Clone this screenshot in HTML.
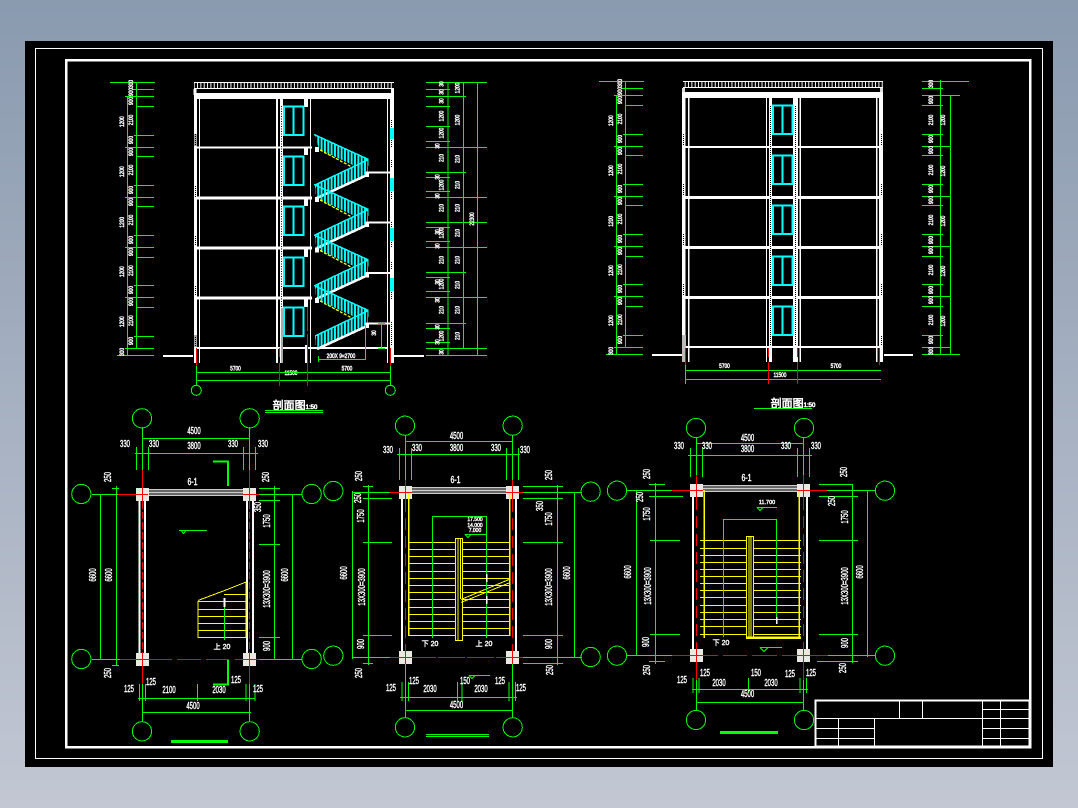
<!DOCTYPE html>
<html><head><meta charset="utf-8"><style>
html,body{margin:0;padding:0;background:#a6afc0}
svg{display:block}
text{font-family:"Liberation Sans","Noto Sans CJK SC",sans-serif;fill:#fff;text-anchor:middle;stroke:#fff;stroke-width:.25}
.p text{font-size:10px;stroke-width:.4}
.e text{font-size:6px;stroke-width:.45}
</style></head><body>
<svg width="1078" height="808" viewBox="0 0 1078 808" xmlns="http://www.w3.org/2000/svg" shape-rendering="crispEdges">
<defs>
<linearGradient id="bg" x1="0" y1="0" x2="0" y2="1"><stop offset="0" stop-color="#8a9aaf"/><stop offset="1" stop-color="#c2c7d3"/></linearGradient>
<pattern id="bal" width="3.34" height="10" patternUnits="userSpaceOnUse"><rect width="2" height="10" fill="#0ff"/></pattern>
<pattern id="par" width="3.34" height="10" patternUnits="userSpaceOnUse"><rect width="1" height="10" fill="#fff"/></pattern>
<g id="win"><path d="M0 .5H21.5M0 29H21.5M1 0V29.5M20.5 0V29.5M10.7 0V29.5" stroke="#0ff" stroke-width="2" fill="none"/></g>
<g id="flight">
<polygon points="315,134.5 368.5,159.5 368,172 319,149.5" fill="url(#bal)"/>
<path d="M314 134.5L368.5 159.5" stroke="#0ff" stroke-width="1.5" fill="none"/>
<path d="M320 150L352 167" stroke="#ff0" stroke-width="1.3" stroke-dasharray="3 1.5" fill="none"/>
<polygon points="315,185 368.5,159.5 368,173 316,197" fill="url(#bal)"/>
<path d="M315 185L368.5 159.5" stroke="#0ff" stroke-width="1.5" fill="none"/>
<path d="M317 198L367 175" stroke="#fff" stroke-width="2.6" fill="none"/>
<path d="M366 172.7H390" stroke="#fff" stroke-width="2" fill="none"/>
<rect x="315" y="147" width="4" height="5" fill="#fff"/><rect x="365" y="172" width="4" height="5" fill="#fff"/>
<rect x="304" y="147" width="4" height="8" fill="#fff"/>
</g>
<g id="colm"><rect width="13" height="13" fill="#e9e9e1"/></g>
</defs>
<rect width="1078" height="808" fill="url(#bg)"/>
<rect x="25" y="41" width="1028" height="726" fill="#000"/>
<rect x="35.5" y="48.5" width="1007" height="710" fill="none" stroke="#fff"/>
<rect x="66" y="60" width="964" height="687" fill="none" stroke="#fff" stroke-width="2.5"/>

<!-- title block -->
<g stroke="#fff" fill="none">
<rect x="815.5" y="700.5" width="214" height="46" stroke-width="2"/>
<path d="M815 718.5H1030M815 728.5H874M815 738.5H874M982 709.5H1030M982 728.5H1030M982 738.5H1030M899.5 700V718M922.5 700V718M982.5 700V747M1000.5 700V747M838.5 718V747M874.5 718V747"/>
</g>

<!-- SECTION 1 -->
<g>
<rect x="194" y="82" width="200" height="7" fill="url(#par)"/>
<path d="M194 82.5H394M194 88.5H394" stroke="#fff"/>
<rect x="193.5" y="89" width="3" height="6" fill="#fff"/><rect x="391" y="89" width="3" height="6" fill="#fff"/>
<rect x="194" y="93" width="200" height="6" fill="#fff"/>
<g fill="#fff">
<rect x="194" y="99" width="3" height="264"/><rect x="199" y="99" width="1" height="264"/>
<rect x="276" y="99" width="2" height="264"/><rect x="280" y="99" width="3" height="264"/>
<rect x="305" y="345" width="2" height="18"/><rect x="310" y="99" width="1" height="264"/>
<rect x="387" y="99" width="1" height="264"/><rect x="390" y="99" width="4" height="264"/>
<rect x="304" y="99" width="4" height="8"/><rect x="304" y="197" width="4" height="9"/><rect x="304" y="248" width="4" height="9"/><rect x="304" y="298" width="4" height="9"/>
<rect x="194" y="146.5" width="118" height="2"/><rect x="194" y="196.5" width="118" height="3"/><rect x="194" y="246.5" width="118" height="3"/><rect x="194" y="296.5" width="118" height="3"/><rect x="194" y="347" width="194" height="2"/>
<rect x="163" y="355" width="30" height="2"/><rect x="394" y="355" width="30" height="2"/>
</g>
<rect x="194" y="134" width="3" height="12" fill="#aaa"/><rect x="194" y="335" width="3" height="12" fill="#aaa"/><rect x="281" y="308" width="2" height="55" fill="#aaa"/>
<path d="M281.5 106V308" stroke="#000" stroke-dasharray="1 1.5"/>
<path d="M195.5 134V146M195.5 186V197M195.5 236V246M195.5 286V296M195.5 337V347M391.5 120V128M391.5 140V148M391.5 160V168M391.5 192V200M391.5 222V228M391.5 242V248M391.5 262V270M391.5 292V300M391.5 322V345" stroke="#000" stroke-dasharray="1 1"/>
<g fill="#0ff"><rect x="390" y="128" width="4" height="11"/><rect x="390" y="178" width="4" height="13"/><rect x="390" y="228" width="4" height="13"/><rect x="390" y="278" width="4" height="13"/></g>
<use href="#win" x="283" y="106"/><use href="#win" x="283" y="156"/><use href="#win" x="283" y="206"/><use href="#win" x="283" y="257"/><use href="#win" x="283" y="307"/>
<use href="#flight"/><use href="#flight" y="50"/><use href="#flight" y="100.5"/><use href="#flight" y="151"/>
<g id="s1l">
<path d="M136.5 82V348M127.5 96V355M110 82.5H155M133 89.5H154M125 96.5H154M136 106.5H154M134 135.5H154M125 147.5H154M136 156.5H154M134 185.5H154M125 197.5H154M136 206.5H154M134 235.5H154M125 247.5H154M136 257.5H154M134 285.5H154M125 297.5H154M136 307.5H154M134 336.5H154M125 348.5H154M117 355.5H154" stroke="#0f0" fill="none"/>
<g class="e">
<text transform="translate(124 121.7) rotate(-90) scale(.8 1)">1200</text><text transform="translate(124 171.7) rotate(-90) scale(.8 1)">1200</text><text transform="translate(124 222.3) rotate(-90) scale(.8 1)">1200</text><text transform="translate(124 271.7) rotate(-90) scale(.8 1)">1200</text><text transform="translate(124 321.7) rotate(-90) scale(.8 1)">1200</text>
<text transform="translate(124 352) rotate(-90) scale(.8 1)">300</text>
<text transform="translate(133 84) rotate(-90) scale(.8 1)">300</text><text transform="translate(133 92) rotate(-90) scale(.8 1)">900</text><text transform="translate(133 101) rotate(-90) scale(.8 1)">900</text>
<text transform="translate(133 120) rotate(-90) scale(.8 1)">2100</text><text transform="translate(133 170) rotate(-90) scale(.8 1)">2100</text><text transform="translate(133 220) rotate(-90) scale(.8 1)">2100</text><text transform="translate(133 270.7) rotate(-90) scale(.8 1)">2100</text><text transform="translate(133 320.7) rotate(-90) scale(.8 1)">2100</text>
<text transform="translate(133 140) rotate(-90) scale(.8 1)">900</text><text transform="translate(133 152) rotate(-90) scale(.8 1)">900</text><text transform="translate(133 190) rotate(-90) scale(.8 1)">900</text><text transform="translate(133 202) rotate(-90) scale(.8 1)">900</text><text transform="translate(133 240) rotate(-90) scale(.8 1)">900</text><text transform="translate(133 252) rotate(-90) scale(.8 1)">900</text><text transform="translate(133 290) rotate(-90) scale(.8 1)">900</text><text transform="translate(133 302) rotate(-90) scale(.8 1)">900</text><text transform="translate(133 341) rotate(-90) scale(.8 1)">900</text>
</g>
</g>
<path d="M426 82.5H487M426 89.5H450M426 96.5H466M426 106.5H450M426 126.5H450M426 141.5H450M426 147.5H487M426 172.5H466M426 177.5H450M426 191.5H450M426 197.5H487M426 222.5H487M426 227.5H450M426 241.5H450M426 247.5H487M426 272.5H466M426 277.5H450M426 291.5H450M426 297.5H487M426 323.5H466M426 328.5H450M426 342.5H450M426 348.5H487M426 355.5H487M448 82V356M463.5 82V348M477.5 82V355" stroke="#0f0" fill="none"/>
<g class="e">
<text transform="translate(443.7 84) rotate(-90) scale(.8 1)">30</text><text transform="translate(443.7 92) rotate(-90) scale(.8 1)">30</text><text transform="translate(443.7 101) rotate(-90) scale(.8 1)">30</text><text transform="translate(443.7 116) rotate(-90) scale(.8 1)">1200</text><text transform="translate(443.7 133) rotate(-90) scale(.8 1)">1200</text><text transform="translate(443.7 158) rotate(-90) scale(.8 1)">210</text><text transform="translate(443.7 185) rotate(-90) scale(.8 1)">1200</text><text transform="translate(443.7 208) rotate(-90) scale(.8 1)">210</text><text transform="translate(443.7 233) rotate(-90) scale(.8 1)">1200</text><text transform="translate(443.7 260) rotate(-90) scale(.8 1)">210</text><text transform="translate(443.7 284) rotate(-90) scale(.8 1)">1200</text><text transform="translate(443.7 310) rotate(-90) scale(.8 1)">210</text><text transform="translate(443.7 336) rotate(-90) scale(.8 1)">1200</text><text transform="translate(443.7 352) rotate(-90) scale(.8 1)">30</text>
<text transform="translate(439.7 146) rotate(-90) scale(.8 1)">30</text><text transform="translate(439.7 177) rotate(-90) scale(.8 1)">30</text><text transform="translate(439.7 196) rotate(-90) scale(.8 1)">30</text><text transform="translate(439.7 232) rotate(-90) scale(.8 1)">30</text><text transform="translate(439.7 246) rotate(-90) scale(.8 1)">30</text><text transform="translate(439.7 282) rotate(-90) scale(.8 1)">30</text><text transform="translate(439.7 300) rotate(-90) scale(.8 1)">30</text><text transform="translate(439.7 327) rotate(-90) scale(.8 1)">30</text><text transform="translate(439.7 342) rotate(-90) scale(.8 1)">30</text>
<text transform="translate(459.7 88) rotate(-90) scale(.8 1)">1200</text><text transform="translate(459.7 120) rotate(-90) scale(.8 1)">1200</text><text transform="translate(459.7 159) rotate(-90) scale(.8 1)">210</text><text transform="translate(459.7 185) rotate(-90) scale(.8 1)">210</text><text transform="translate(459.7 208) rotate(-90) scale(.8 1)">210</text><text transform="translate(459.7 233) rotate(-90) scale(.8 1)">210</text><text transform="translate(459.7 260) rotate(-90) scale(.8 1)">210</text><text transform="translate(459.7 285) rotate(-90) scale(.8 1)">210</text><text transform="translate(459.7 310) rotate(-90) scale(.8 1)">210</text><text transform="translate(459.7 336) rotate(-90) scale(.8 1)">210</text>
<text transform="translate(474 219) rotate(-90) scale(.8 1)">22300</text>
<text transform="translate(235.5 370.5) scale(.8 1)">5700</text><text transform="translate(291 375) scale(.8 1)">11500</text><text transform="translate(347 370.5) scale(.8 1)">5700</text>
<text transform="translate(341 358) scale(.8 1)">200X 9=2700</text>
<text transform="translate(376 333) rotate(-90) scale(.8 1)">30</text>
</g>
<path d="M196 372.5H391M196 380.5H391M196.5 366V385M390.5 366V385M318 359.5H366M318.5 356V362M365.5 325V360M381.5 323V348M378 348.5H385M378 323.5H385" stroke="#0f0" fill="none"/>
<path d="M196.5 348V366M279.5 348V357M279.5 363V386M307.5 307V331M307.5 334V386M390.5 348V366" stroke="#f00" fill="none"/>
<circle cx="196.3" cy="390.3" r="5" stroke="#0f0" fill="none"/><circle cx="390.3" cy="390.3" r="5" stroke="#0f0" fill="none"/>
</g>
<text x="295" y="409" style="font-size:11px;stroke-width:.6">剖面图<tspan style="font-size:6px">1:50</tspan></text>
<path d="M265 410.5H323M265 412.5H323" stroke="#0f0"/>

<!-- SECTION 2 -->
<g>
<rect x="683" y="81" width="200" height="7" fill="url(#par)"/>
<path d="M683 81.5H883M683 87.5H883" stroke="#fff"/>
<rect x="682" y="88" width="3" height="6" fill="#ddd"/><rect x="880" y="88" width="3" height="6" fill="#ddd"/>
<g fill="#fff">
<rect x="682" y="92" width="201" height="6"/>
<rect x="682" y="98" width="3.5" height="264"/><rect x="688" y="98" width="1.4" height="264"/>
<rect x="766" y="98" width="1" height="264"/><rect x="769" y="98" width="3" height="264"/>
<rect x="793" y="98" width="5" height="264"/><rect x="799.5" y="98" width="1.4" height="264"/>
<rect x="876" y="98" width="1.4" height="264"/><rect x="879" y="98" width="4" height="264"/>
<rect x="682" y="146" width="201" height="2"/><rect x="682" y="196" width="201" height="3"/><rect x="682" y="246" width="201" height="3"/><rect x="682" y="296" width="201" height="3"/><rect x="682" y="346" width="201" height="2"/>
<rect x="652" y="354" width="30" height="2"/><rect x="884" y="354" width="29" height="2"/>
</g>
<path d="M770.5 106V345M795.5 106V345M683.5 134V146M683.5 184V196M683.5 234V246M683.5 284V296M881.5 134V146M881.5 184V196M881.5 234V246M881.5 284V296M881.5 336V346" stroke="#000" stroke-dasharray="1 1"/>
<rect x="682" y="335" width="4" height="27" fill="#bbb"/>
<use href="#win" x="772" y="105"/><use href="#win" x="772" y="155"/><use href="#win" x="772" y="205"/><use href="#win" x="772" y="256"/><use href="#win" x="772" y="306"/>
<use href="#s1l" x="489" y="-1"/>
<path d="M922 81.5H969M922 88.5H943M922 95.5H960M922 105.5H943M922 134.5H943M922 146.5H951M922 155.5H943M922 184.5H943M922 196.5H951M922 205.5H943M922 234.5H943M922 246.5H951M922 256.5H943M922 284.5H943M922 296.5H951M922 306.5H943M922 335.5H943M922 347.5H951M922 354.5H960M940.5 80V354M950.5 95V354" stroke="#0f0" fill="none"/>
<g class="e">
<text transform="translate(933 84) rotate(-90) scale(.8 1)">300</text><text transform="translate(933 100) rotate(-90) scale(.8 1)">900</text><text transform="translate(933 120) rotate(-90) scale(.8 1)">2100</text><text transform="translate(933 139) rotate(-90) scale(.8 1)">900</text><text transform="translate(933 150) rotate(-90) scale(.8 1)">900</text><text transform="translate(933 170) rotate(-90) scale(.8 1)">2100</text><text transform="translate(933 189) rotate(-90) scale(.8 1)">900</text><text transform="translate(933 200) rotate(-90) scale(.8 1)">900</text><text transform="translate(933 220) rotate(-90) scale(.8 1)">2100</text><text transform="translate(933 240) rotate(-90) scale(.8 1)">900</text><text transform="translate(933 250) rotate(-90) scale(.8 1)">900</text><text transform="translate(933 270) rotate(-90) scale(.8 1)">2100</text><text transform="translate(933 290) rotate(-90) scale(.8 1)">900</text><text transform="translate(933 300) rotate(-90) scale(.8 1)">900</text><text transform="translate(933 320) rotate(-90) scale(.8 1)">2100</text><text transform="translate(933 340) rotate(-90) scale(.8 1)">900</text><text transform="translate(933 351) rotate(-90) scale(.8 1)">300</text>
<text transform="translate(945 120) rotate(-90) scale(.8 1)">1200</text><text transform="translate(945 171) rotate(-90) scale(.8 1)">1200</text><text transform="translate(945 221) rotate(-90) scale(.8 1)">1200</text><text transform="translate(945 271) rotate(-90) scale(.8 1)">1200</text><text transform="translate(945 321) rotate(-90) scale(.8 1)">1200</text>
<text transform="translate(724.5 368) scale(.8 1)">5700</text><text transform="translate(780 377) scale(.8 1)">11500</text><text transform="translate(836 368) scale(.8 1)">5700</text>
</g>
<path d="M685 370.5H881M685 379.5H881M685.5 365V384" stroke="#0f0" fill="none"/>
<path d="M685.5 348V365M768.5 348V357M768.5 362V384M797.5 348V357M797.5 362V384M879.5 348V365" stroke="#f00" fill="none"/>
</g>
<text x="793" y="407" style="font-size:11px;stroke-width:.6">剖面图<tspan style="font-size:6px">1:50</tspan></text>
<path d="M754 408.5H812" stroke="#0f0" stroke-width="1"/>

<!-- PLAN 1 -->
<g class="p">
<g fill="none" stroke="#0f0">
<circle cx="142" cy="418.3" r="9.6"/><circle cx="249.7" cy="418.3" r="9.6"/><circle cx="142" cy="731.3" r="9.6"/><circle cx="249.7" cy="731.3" r="9.6"/>
<circle cx="81.3" cy="494" r="9.6"/><circle cx="81.3" cy="659" r="9.6"/><circle cx="311.7" cy="494" r="9.6"/><circle cx="311.7" cy="659" r="9.6"/>
</g>
<g fill="#fff"><rect x="138.5" y="500" width="2" height="153"/><rect x="144" y="500" width="2" height="153"/><rect x="246" y="500" width="2" height="153"/><rect x="252" y="500" width="2" height="153"/></g>
<path d="M149 489.5H243M149 491H243M149 492.5H243M149 494H243M149 495.5H243" stroke="#ccc" fill="none"/>
<use href="#colm" x="136" y="488"/><use href="#colm" x="243" y="488"/><use href="#colm" x="136" y="653"/><use href="#colm" x="243" y="653"/>
<path d="M213 461.5H228V486M228 660V684.5H213" stroke="#0f0" stroke-width="2" fill="none"/>
<path d="M198 601V637.5H246V582L226 590L198 600.5M198 609.5H246M198 616.5H246M198 623.5H246M198 630.5H246M198 601.5H246M224 594.5H246" stroke="#ff0" fill="none"/>
<path d="M224.5 607V640M179 530.5H207M181 530.5L183.5 533.5L186 530.5" stroke="#0f0" fill="none"/>
<rect x="223.5" y="598" width="2" height="9" fill="#fff"/>
<path d="M142 438.5H250M135 453.5H258M136.5 447V470M142.5 427V470M148.5 447V470M243.5 447V470M249.5 427V470M255.5 447V470M92 494.5H136M92 659.5H136M100.5 494V660M116.5 486V666M112 488.5H119M112 665.5H119M259 488.5H280M259 494.5H302M259 500.5H280M259 544.5H280M259 637.5H280M259 659.5H302M274.5 486V660M292.5 494V660M142.5 684V722M249.5 684V722M138 698.5H255M142 712.5H251M139.5 684V701M145.5 684V701M197.5 684V701M246 684V701M255 684V701" stroke="#0f0" fill="none"/>
<path d="M142.5 470V684M249.5 470V684" stroke="#f00" stroke-dasharray="0" fill="none" opacity="0"/>
<path d="M142.5 470V502M249.5 470V502M142.5 652V684M249.5 652V684M118 494.5H148M243 494.5H259M120 659.5H172M177 659.5H201M206 659.5H229M235 659.5H259" stroke="#f00" fill="none"/>
<path d="M142.5 502V652M249.5 502V652" stroke="#f00" stroke-dasharray="7 3" fill="none"/>
<text transform="translate(194 434) scale(.6 1)">4500</text><text transform="translate(125 447) scale(.6 1)">330</text><text transform="translate(154 447) scale(.6 1)">330</text><text transform="translate(194 449) scale(.6 1)">3800</text><text transform="translate(233 447) scale(.6 1)">330</text><text transform="translate(263 447) scale(.6 1)">330</text>
<text transform="translate(192.5 485) scale(.7 1)">6-1</text>
<text transform="translate(96 575) rotate(-90) scale(.6 1)">6600</text><text transform="translate(112 575) rotate(-90) scale(.6 1)">6600</text><text transform="translate(288 575) rotate(-90) scale(.6 1)">6600</text>
<text transform="translate(111 477) rotate(-90) scale(.6 1)">250</text><text transform="translate(111 673) rotate(-90) scale(.6 1)">250</text><text transform="translate(269 477) rotate(-90) scale(.6 1)">250</text><text transform="translate(261 507) rotate(-90) scale(.6 1)">350</text>
<text transform="translate(270 521) rotate(-90) scale(.6 1)">1750</text><text transform="translate(270 589) rotate(-90) scale(.6 1)">13X300=3900</text><text transform="translate(270 646) rotate(-90) scale(.6 1)">900</text>
<text transform="translate(129 692) scale(.6 1)">125</text><text transform="translate(151 685) scale(.6 1)">125</text><text transform="translate(169 693) scale(.6 1)">2100</text><text transform="translate(219 693) scale(.6 1)">2030</text><text transform="translate(236 683) scale(.6 1)">125</text><text transform="translate(258 692) scale(.6 1)">125</text><text transform="translate(193 709) scale(.6 1)">4500</text>
<text x="222" y="649" style="font-size:7px">上 20</text>
<rect x="171" y="740" width="57" height="3" fill="#0f0"/>
</g>

<!-- PLAN 2 -->
<g class="p">
<g fill="none" stroke="#0f0">
<circle cx="405" cy="425.7" r="9.6"/><circle cx="512.7" cy="425.7" r="9.6"/><circle cx="405" cy="727.3" r="9.6"/><circle cx="512.7" cy="727.3" r="9.6"/>
<circle cx="333.3" cy="491" r="9.6"/><circle cx="333.3" cy="655.7" r="9.6"/><circle cx="590.7" cy="491.7" r="9.6"/><circle cx="590.7" cy="657" r="9.6"/>
</g>
<g fill="#fff"><rect x="401" y="499" width="2" height="152"/><rect x="515" y="499" width="2" height="152"/></g>
<path d="M412 487.5H506M412 489H506M412 490.5H506M412 492H506M412 493.5H506" stroke="#ccc" fill="none"/>
<use href="#colm" x="399" y="486"/><use href="#colm" x="506" y="486"/><use href="#colm" x="399" y="651"/><use href="#colm" x="506" y="651"/>
<path d="M408.5 494V636M509.5 494V636" stroke="#ff0" stroke-width="1.5" fill="none"/>
<path d="M408 542.5H509M408 549.5H509M408 556.5H509M408 563.5H509M408 571.5H509M408 578.5H509M408 585.5H509M408 592.5H509M408 599.5H509M408 607.5H509M408 614.5H509M408 621.5H509M408 628.5H509M408 635.5H509" stroke="#ff0" fill="none"/>
<rect x="455.5" y="538.5" width="7" height="102" fill="#000" stroke="#ff0"/>
<path d="M458 539V640M460.5 539V599M461 599.5L509 579.5M461 602.5L509 583" stroke="#ff0" fill="none"/>
<path d="M432.5 638V516.5H486.5V638M465 534.5H486.5M465 534.5L468 537.5L471 534.5" stroke="#0f0" fill="none"/>
<rect x="486" y="574" width="1.5" height="8" fill="#fff"/><rect x="486" y="596" width="1.5" height="8" fill="#fff"/>
<path d="M405 441.5H513M397 454.5H520M399.5 448V480M405.5 435V480M411.5 448V480M506.5 448V480M512.5 435V480M518.5 448V480M353 492.5H390M353 657.5H390M352.5 491V659M368.5 485V665M363 486.5H373M363 498.5H392M363 542.5H392M363 635.5H392M363 663.5H373M523 486.5H563M523 492.5H582M523 498.5H563M523 542.5H563M523 635.5H563M523 657.5H582M523 663.5H563M557.5 485V665M574.5 492V658M405.5 664V718M512.5 664V718M400 697.5H517M405 710.5H513M402 682V701M408.5 682V701M457.5 682V701M462 682V701M509 682V701M515.5 682V701M469 675.5H490M469 675.5L472 678.5L475 675.5" stroke="#0f0" fill="none"/>
<path d="M405.5 480V500M512.5 480V500M405.5 650V664M512.5 650V664M390 492.5H412M506 492.5H523M390 657.5H436M438 657.5H465M467 657.5H494M496 657.5H523" stroke="#f00" fill="none"/>
<path d="M405.5 500V651M512.5 500V651" stroke="#f00" stroke-dasharray="12 6" fill="none"/>
<text transform="translate(456.5 439) scale(.6 1)">4500</text><text transform="translate(388 453) scale(.6 1)">330</text><text transform="translate(417 451) scale(.6 1)">330</text><text transform="translate(456.5 451) scale(.6 1)">3800</text><text transform="translate(496 451) scale(.6 1)">330</text><text transform="translate(525 453) scale(.6 1)">330</text>
<text transform="translate(455.5 483) scale(.7 1)">6-1</text>
<text transform="translate(347 573) rotate(-90) scale(.6 1)">6600</text><text transform="translate(570 573) rotate(-90) scale(.6 1)">6600</text>
<text transform="translate(362 476) rotate(-90) scale(.6 1)">250</text><text transform="translate(361 498) rotate(-90) scale(.6 1)">250</text><text transform="translate(362 673) rotate(-90) scale(.6 1)">250</text><text transform="translate(552 475) rotate(-90) scale(.6 1)">250</text><text transform="translate(543 506) rotate(-90) scale(.6 1)">350</text><text transform="translate(553 670) rotate(-90) scale(.6 1)">250</text>
<text transform="translate(364 516) rotate(-90) scale(.6 1)">1750</text><text transform="translate(552 519) rotate(-90) scale(.6 1)">1750</text><text transform="translate(365 587) rotate(-90) scale(.6 1)">13X300=3900</text><text transform="translate(552 587) rotate(-90) scale(.6 1)">13X300=3900</text><text transform="translate(364 644) rotate(-90) scale(.6 1)">900</text><text transform="translate(552 644) rotate(-90) scale(.6 1)">900</text>
<text transform="translate(391 691) scale(.6 1)">125</text><text transform="translate(414 684) scale(.6 1)">125</text><text transform="translate(430 692) scale(.6 1)">2030</text><text transform="translate(465 684) scale(.6 1)">150</text><text transform="translate(481 692) scale(.6 1)">2030</text><text transform="translate(500 684) scale(.6 1)">125</text><text transform="translate(521 691) scale(.6 1)">125</text><text transform="translate(456.5 708) scale(.6 1)">4500</text>
<text x="430" y="646" style="font-size:7px">下 20</text><text x="484" y="646" style="font-size:7px">上 20</text>
<text x="475" y="521" style="font-size:5px;stroke-width:.4">17.500</text><text x="475" y="527" style="font-size:5px;stroke-width:.4">14.000</text><text x="475" y="532" style="font-size:5px;stroke-width:.4">7.000</text>
<path d="M426 734.5H489M426 736.5H489" stroke="#0f0" fill="none"/>
</g>

<!-- PLAN 3 -->
<g class="p">
<g fill="none" stroke="#0f0">
<circle cx="696" cy="428" r="9.6"/><circle cx="804" cy="428" r="9.6"/><circle cx="696" cy="720" r="9.6"/><circle cx="804" cy="720" r="9.6"/>
<circle cx="617" cy="490.7" r="9.6"/><circle cx="617" cy="655.7" r="9.6"/><circle cx="885" cy="490.7" r="9.6"/><circle cx="885" cy="655.7" r="9.6"/>
</g>
<g fill="#fff"><rect x="692" y="497" width="2" height="152"/><rect x="806" y="497" width="2" height="152"/></g>
<path d="M703 485.5H797M703 487H797M703 488.5H797M703 490H797M703 491.5H797" stroke="#ccc" fill="none"/>
<use href="#colm" x="690" y="484"/><use href="#colm" x="797" y="484"/><use href="#colm" x="690" y="649"/><use href="#colm" x="797" y="649"/>
<path d="M699 491H704V638M799 638V491H802" stroke="#ff0" stroke-width="1.5" fill="none"/>
<path d="M700 540.5H801M700 548.5H801M700 555.5H801M700 562.5H801M700 569.5H801M700 576.5H801M700 583.5H801M700 590.5H801M700 597.5H801M700 605.5H801M700 612.5H801M700 619.5H801M700 626.5H801M700 634.5H801" stroke="#ff0" fill="none"/>
<rect x="746.5" y="536.5" width="7" height="102" fill="#000" stroke="#ff0"/>
<path d="M749 537V638M751 537V638M747 638.5H801" stroke="#ff0" fill="none"/>
<path d="M746 637.5H801" stroke="#ff0" stroke-width="2" fill="none"/>
<path d="M723.5 637V519.5H776.5V620M757 507.5H777M757 507.5L760 510.5L763 507.5M760 647.5H782M760 647.5L764 651.5L768 647.5" stroke="#0f0" fill="none"/>
<rect x="776" y="617" width="1.5" height="7" fill="#fff"/>
<path d="M696 443.5H804M688 455.5H812M690.5 448V477M696.5 438V477M702.5 448V477M797.5 448V477M803.5 438V477M809.5 448V477M627 490.5H672M627 655.5H672M636.5 490V656M655.5 483V664M649 484.5H665M649 496.5H683M650 540.5H680M650 634.5H680M649 661.5H665M819 484.5H853M827 490.5H876M819 496.5H858M819 540.5H858M819 634.5H858M828 655.5H876M817 661.5H858M852.5 484V663M867.5 490V657M696.5 680V710M803.5 680V710M692 689.5H808M696 702.5H804M693 678V693M699 678V693M748.5 678V693M800 678V693M806.5 678V693" stroke="#0f0" fill="none"/>
<path d="M696.5 475V498M803.5 475V498M696.5 648V680M803.5 648V680M672 490.5H703M797 490.5H827M672 655.5H718M723 655.5H747M752 655.5H777M782 655.5H828" stroke="#f00" fill="none"/>
<path d="M696.5 498V649M803.5 498V649" stroke="#f00" stroke-dasharray="12 6" fill="none"/>
<text transform="translate(747.5 441) scale(.6 1)">4500</text><text transform="translate(679 449) scale(.6 1)">330</text><text transform="translate(707 449) scale(.6 1)">330</text><text transform="translate(747.5 452) scale(.6 1)">3800</text><text transform="translate(786 449) scale(.6 1)">330</text><text transform="translate(816 449) scale(.6 1)">330</text>
<text transform="translate(746.5 481) scale(.7 1)">6-1</text>
<text transform="translate(631 572) rotate(-90) scale(.6 1)">6600</text><text transform="translate(863 572) rotate(-90) scale(.6 1)">6600</text>
<text transform="translate(650 474) rotate(-90) scale(.6 1)">250</text><text transform="translate(643 497) rotate(-90) scale(.6 1)">250</text><text transform="translate(650 670) rotate(-90) scale(.6 1)">250</text><text transform="translate(847 472) rotate(-90) scale(.6 1)">250</text><text transform="translate(835 501) rotate(-90) scale(.6 1)">250</text><text transform="translate(846 668) rotate(-90) scale(.6 1)">250</text>
<text transform="translate(650 514) rotate(-90) scale(.6 1)">1750</text><text transform="translate(848 517) rotate(-90) scale(.6 1)">1750</text><text transform="translate(651 586) rotate(-90) scale(.6 1)">13X300=3900</text><text transform="translate(848 586) rotate(-90) scale(.6 1)">13X300=3900</text><text transform="translate(649 642) rotate(-90) scale(.6 1)">900</text><text transform="translate(848 643) rotate(-90) scale(.6 1)">900</text>
<text transform="translate(682 683) scale(.6 1)">125</text><text transform="translate(705 676) scale(.6 1)">125</text><text transform="translate(719 686) scale(.6 1)">2030</text><text transform="translate(756 676) scale(.6 1)">150</text><text transform="translate(771 686) scale(.6 1)">2030</text><text transform="translate(790 677) scale(.6 1)">125</text><text transform="translate(811 676) scale(.6 1)">125</text><text transform="translate(747.5 697) scale(.6 1)">4500</text>
<text x="721" y="645" style="font-size:7px">下 20</text>
<text x="767" y="504" style="font-size:5.5px;stroke-width:.4">11.700</text>
<rect x="720" y="731" width="58" height="3" fill="#0f0"/>
</g>
</svg>
</body></html>
